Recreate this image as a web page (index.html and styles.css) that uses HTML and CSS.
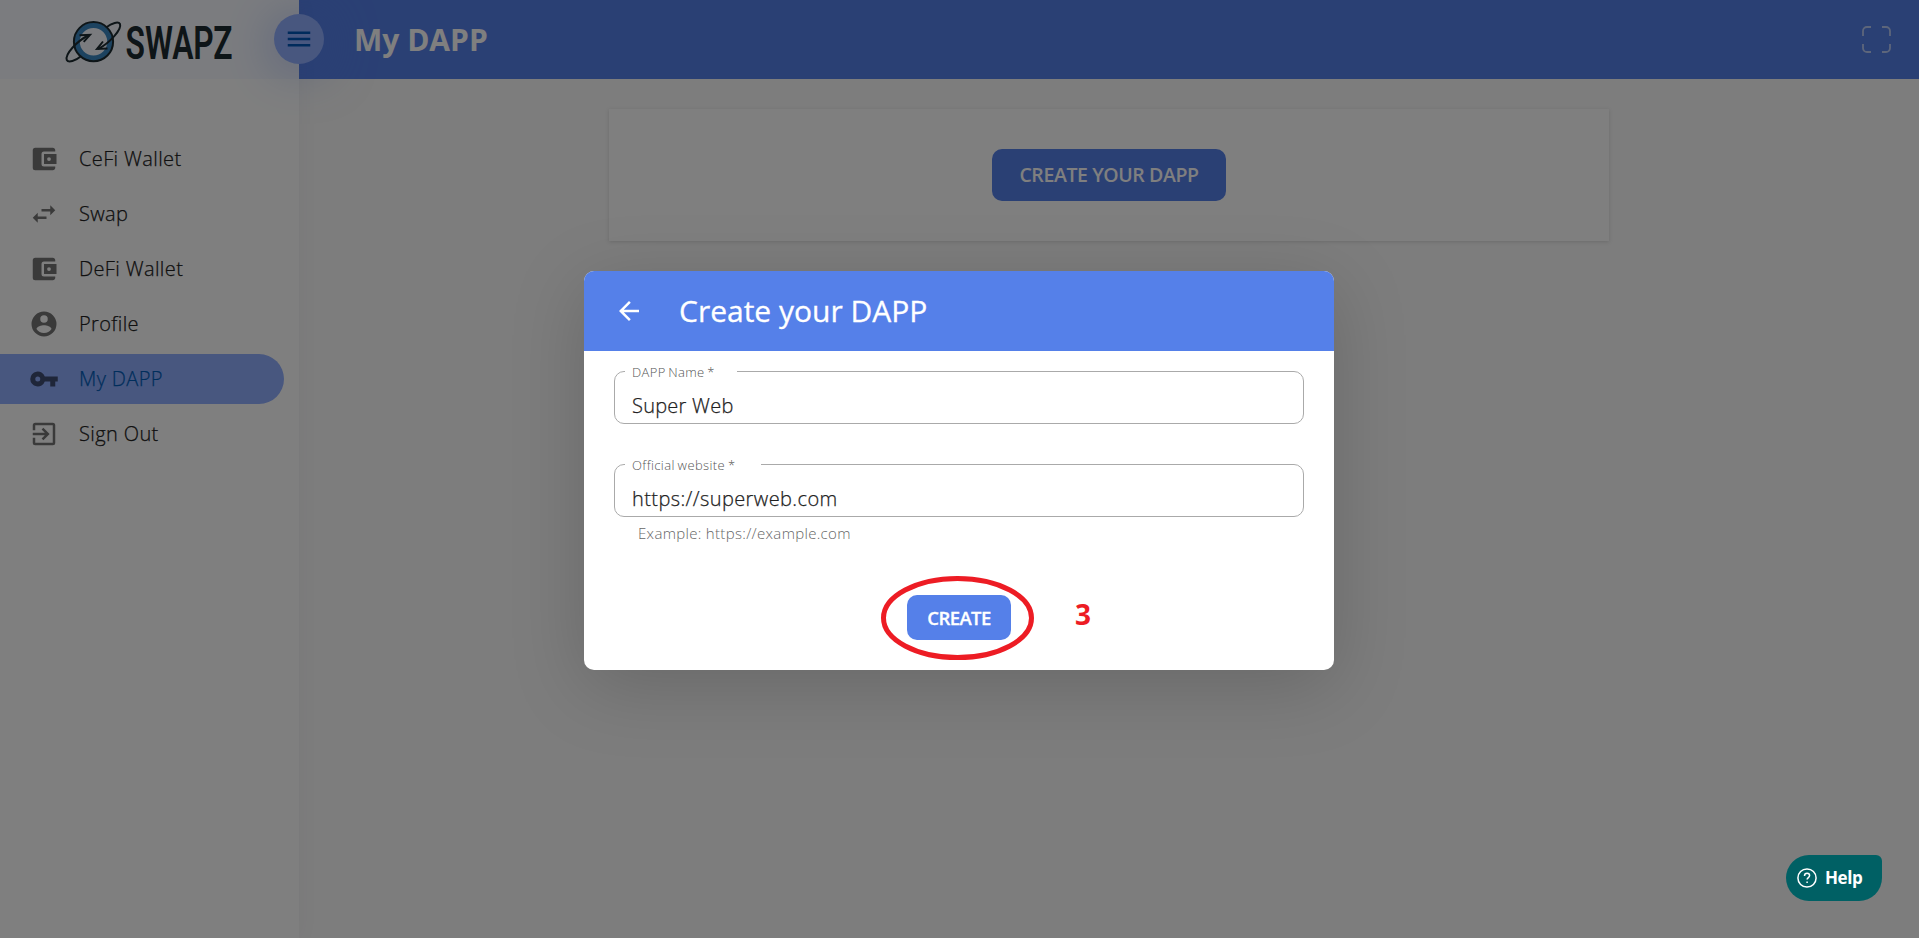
FILE: index.html
```
<!DOCTYPE html>
<html lang="en">
<head>
<meta charset="utf-8">
<title>My DAPP</title>
<link rel="stylesheet" href="styles.css">
</head>
<body>
<div class="app">
  <aside class="sidebar">
    <div class="brand">
      <svg class="brand-logo" width="176" height="72" viewBox="64 4 176 72">
        <circle cx="93.500" cy="41.700" r="16.500" fill="none" stroke="#3b86c0" stroke-width="5.500"/>
        <circle cx="93.500" cy="41.700" r="19.600" fill="none" stroke="#1c2b30" stroke-width="2"/>
        <path d="M89 35C77 41 64.800 54 66.800 60c1.500 3 8.500 1 14.500-4" fill="none" stroke="#1c2b30" stroke-width="2"/>
        <path d="M98 49C110 43 122 29 120 24c-1.500-3-8-1-14 3.500" fill="none" stroke="#1c2b30" stroke-width="2"/>
        <path d="M79.500 35.200l10.500-.4-6.300 7" fill="none" stroke="#1c2b30" stroke-width="2"/>
        <path d="M103 41.500l-6 7.500 10.500-.4" fill="none" stroke="#1c2b30" stroke-width="2"/>
        <text class="brand-name" x="125.500" y="58.600" textLength="107" lengthAdjust="spacingAndGlyphs">SWAPZ</text>
      </svg>
    </div>
    <nav class="menu">
      <a class="item"><svg viewBox="0 0 24 24"><path d="M21 18v1c0 1.100-.9 2-2 2H5a2 2 0 0 1-2-2V5a2 2 0 0 1 2-2h14c1.100 0 2 .9 2 2v1h-9a2 2 0 0 0-2 2v8a2 2 0 0 0 2 2h9zm-9-2h10V8H12v8zm4-2.500a1.500 1.500 0 1 1 0-3 1.500 1.500 0 0 1 0 3z"/></svg><span>CeFi Wallet</span></a>
      <a class="item"><svg viewBox="0 0 24 24"><path d="M6.990 11L3 15l3.990 4v-3H14v-2H6.990v-3zM21 9l-3.990-4v3H10v2h7.010v3L21 9z"/></svg><span>Swap</span></a>
      <a class="item"><svg viewBox="0 0 24 24"><path d="M21 18v1c0 1.100-.9 2-2 2H5a2 2 0 0 1-2-2V5a2 2 0 0 1 2-2h14c1.100 0 2 .9 2 2v1h-9a2 2 0 0 0-2 2v8a2 2 0 0 0 2 2h9zm-9-2h10V8H12v8zm4-2.500a1.500 1.500 0 1 1 0-3 1.500 1.500 0 0 1 0 3z"/></svg><span>DeFi Wallet</span></a>
      <a class="item"><svg viewBox="0 0 24 24"><path d="M12 2a10 10 0 1 0 0 20 10 10 0 0 0 0-20zm0 3a3 3 0 1 1 0 6 3 3 0 0 1 0-6zm0 14.200a7.200 7.200 0 0 1-6-3.220c.03-1.990 4-3.080 6-3.080s5.970 1.090 6 3.080a7.200 7.200 0 0 1-6 3.220z"/></svg><span>Profile</span></a>
      <a class="item active"><svg viewBox="0 0 24 24"><path d="M12.650 10A6 6 0 0 0 1 12a6 6 0 0 0 11.650 2H17v4h4v-4h2v-4H12.650zM7 14a2 2 0 1 1 0-4 2 2 0 0 1 0 4z"/></svg><span>My DAPP</span></a>
      <a class="item"><svg viewBox="0 0 24 24"><path d="M10.090 15.590L11.500 17l5-5-5-5-1.410 1.410L12.670 11H3v2h9.670l-2.580 2.590zM19 3H5a2 2 0 0 0-2 2v4h2V5h14v14H5v-4H3v4a2 2 0 0 0 2 2h14a2 2 0 0 0 2-2V5a2 2 0 0 0-2-2z"/></svg><span>Sign Out</span></a>
    </nav>
    <button class="toggle"><svg width="30" height="30" viewBox="0 0 24 24"><path d="M3 18h18v-2H3v2zm0-5h18v-2H3v2zm0-7v2h18V6H3z"/></svg></button>
  </aside>
  <section class="page">
    <header class="topbar">
      <h1>My DAPP</h1>
      <svg class="fullscreen" width="29" height="27" viewBox="0 0 29 27"><path d="M1 10V5a4 4 0 0 1 4-4h4M20 1h4a4 4 0 0 1 4 4v5M28 18v4a4 4 0 0 1-4 4h-4M9 26H5a4 4 0 0 1-4-4v-4"/></svg>
    </header>
    <main class="content">
      <div class="card"><button class="open-create">CREATE YOUR DAPP</button></div>
    </main>
  </section>
</div>
<div class="overlay">
  <div class="dialog">
    <div class="dialog-head">
      <svg width="30" height="30" viewBox="0 0 24 24"><path d="M20 11H7.830l5.590-5.590L12 4l-8 8 8 8 1.410-1.410L7.830 13H20v-2z"/></svg>
      <h2>Create your DAPP</h2>
    </div>
    <form class="dialog-body">
      <fieldset class="field"><legend class="legend-name"><span>DAPP Name *</span></legend><div class="value">Super Web</div></fieldset>
      <fieldset class="field"><legend class="legend-site"><span>Official website *</span></legend><div class="value value-site">https://superweb.com</div></fieldset>
      <div class="hint">Example: https://example.com</div>
      <div class="actions">
        <button class="create" type="button">CREATE</button>
        <svg class="ring" width="154" height="84" viewBox="0 0 154 84"><ellipse cx="76.500" cy="42" rx="74" ry="39.500"/></svg>
        <span class="step">3</span>
      </div>
    </form>
  </div>
</div>
<button class="help"><svg width="20" height="20" viewBox="0 0 20 20"><circle cx="10" cy="10" r="9.100"/><path d="M7.500 8c0-1.700 1-2.700 2.600-2.700s2.500 1 2.500 2.300c0 2-2.500 2-2.500 4"/><path d="M10.100 13.400v1.600"/></svg><span>Help</span></button>
</body>
</html>
```
FILE: styles.css
```
* { box-sizing: border-box; }
body { margin: 0; height: 938px; overflow: hidden; font-family: "Open Sans", "Noto Sans", sans-serif; color: #212121; }
button { border: 0; padding: 0; font-family: inherit; }
h1, h2 { margin: 0; }
.app { display: flex; height: 938px; background: #fafafa; }
.sidebar { position: relative; z-index: 1; width: 299px; background: #fff; box-shadow: 0 0 20px rgba(82, 63, 105, .05); }
.brand { height: 79px; padding: 4px 0 0 64px; background: #f7f9ff; }
.brand-logo { display: block; overflow: visible; }
.brand-name { font: 600 46px Roboto, sans-serif; fill: #1c2b30; }
.menu { display: flex; flex-direction: column; gap: 5px; padding-top: 55px; }
.item { display: flex; align-items: center; gap: 20px; width: 284px; height: 50px; padding-left: 29px; font-size: 20px; font-weight: 300; letter-spacing: .38px; }
.item span { margin-bottom: 2px; -webkit-text-stroke: .25px currentColor; }
.item svg { width: 30px; height: 30px; fill: #757575; }
.active { background: #90aeff; border-radius: 0 25px 25px 0; color: #005cb8; }
.active svg { fill: #3f4c73; }
.toggle { position: absolute; left: 274px; top: 14px; width: 50px; height: 50px; border-radius: 50%; background: #90aeff; box-shadow: 0 5px 50px rgba(85, 128, 233, .5); display: flex; align-items: center; justify-content: center; }
.toggle svg { fill: #0056b8; }
.page { flex: 1; }
.topbar { height: 79px; padding: 0 28px 0 55px; background: #5580e9; color: #fff; display: flex; align-items: center; justify-content: space-between; }
.topbar h1 { font-size: 30px; font-weight: 700; }
.fullscreen path { fill: none; stroke: rgba(255, 255, 255, .6); stroke-width: 1.800px; }
.content { padding: 30px 310px; }
.card { height: 132px; background: #fff; box-shadow: 0 1px 4px rgba(0, 0, 0, .14); display: flex; align-items: center; justify-content: center; }
.open-create { width: 234px; height: 52px; padding-bottom: 2px; border-radius: 10px; background: #5580e9; color: #fff; font-size: 19.500px; font-weight: 600; letter-spacing: -.4px; }
.overlay { position: absolute; inset: 0; z-index: 2; padding-top: 271px; background: rgba(0, 0, 0, .5); }
.dialog { width: 750px; height: 399px; margin-left: 584px; border-radius: 10px; overflow: hidden; background: #fff; box-shadow: 0 16px 75px rgba(0, 0, 0, .17); }
.dialog-head { height: 80px; padding-left: 30px; background: #5580e9; color: #fff; display: flex; align-items: center; gap: 35px; }
.dialog-head svg { fill: #fff; }
.dialog-head h2 { margin-bottom: 2px; font-size: 30px; font-weight: 400; -webkit-text-stroke: .3px #fff; }
.dialog-body { padding: 20px 30px 0; }
.field { height: 53px; margin: 0 0 40px; padding: 0; border: 1px solid #aaa; border-radius: 10px; }
.field legend { height: 1px; margin-left: 10px; padding: 0 0 0 7px; font-size: 13px; font-weight: 300; line-height: 3px; letter-spacing: .35px; word-spacing: -1px; white-space: nowrap; color: #555; }
.legend-name { width: 112px; }
.field .legend-site { width: 136px; letter-spacing: .4px; }
.value { padding: 20px 0 0 17px; font-size: 20px; line-height: 28px; font-weight: 300; letter-spacing: .25px; -webkit-text-stroke: .25px currentColor; }
.value-site { letter-spacing: .4px; }
.hint { margin: -36px 0 0 24px; font-size: 15px; line-height: 24px; font-weight: 300; letter-spacing: .32px; color: #666; }
.actions { position: relative; display: flex; justify-content: center; padding-top: 50px; }
.create { width: 104px; height: 45px; border-radius: 10px; background: #5580e9; color: #fff; font-size: 18.500px; font-weight: 600; letter-spacing: -.6px; -webkit-text-stroke: .3px #fff; }
.ring { position: absolute; left: 267px; top: 31px; }
.ring ellipse { fill: none; stroke: #ed1c24; stroke-width: 5px; }
.step { position: absolute; left: 461px; top: 49px; font-size: 28px; line-height: 40px; font-weight: 700; color: #ed1c24; }
.help { position: absolute; z-index: 3; left: 1786px; top: 855px; width: 96px; height: 46px; padding-left: 11px; border-radius: 23px 6px 23px 23px; background: #006064; color: #fff; display: flex; align-items: center; gap: 8px; font-size: 17px; font-weight: 700; letter-spacing: -.4px; }
.help span { margin-bottom: 1px; }
.help svg { fill: none; stroke: #fff; stroke-width: 1.500px; }
```
